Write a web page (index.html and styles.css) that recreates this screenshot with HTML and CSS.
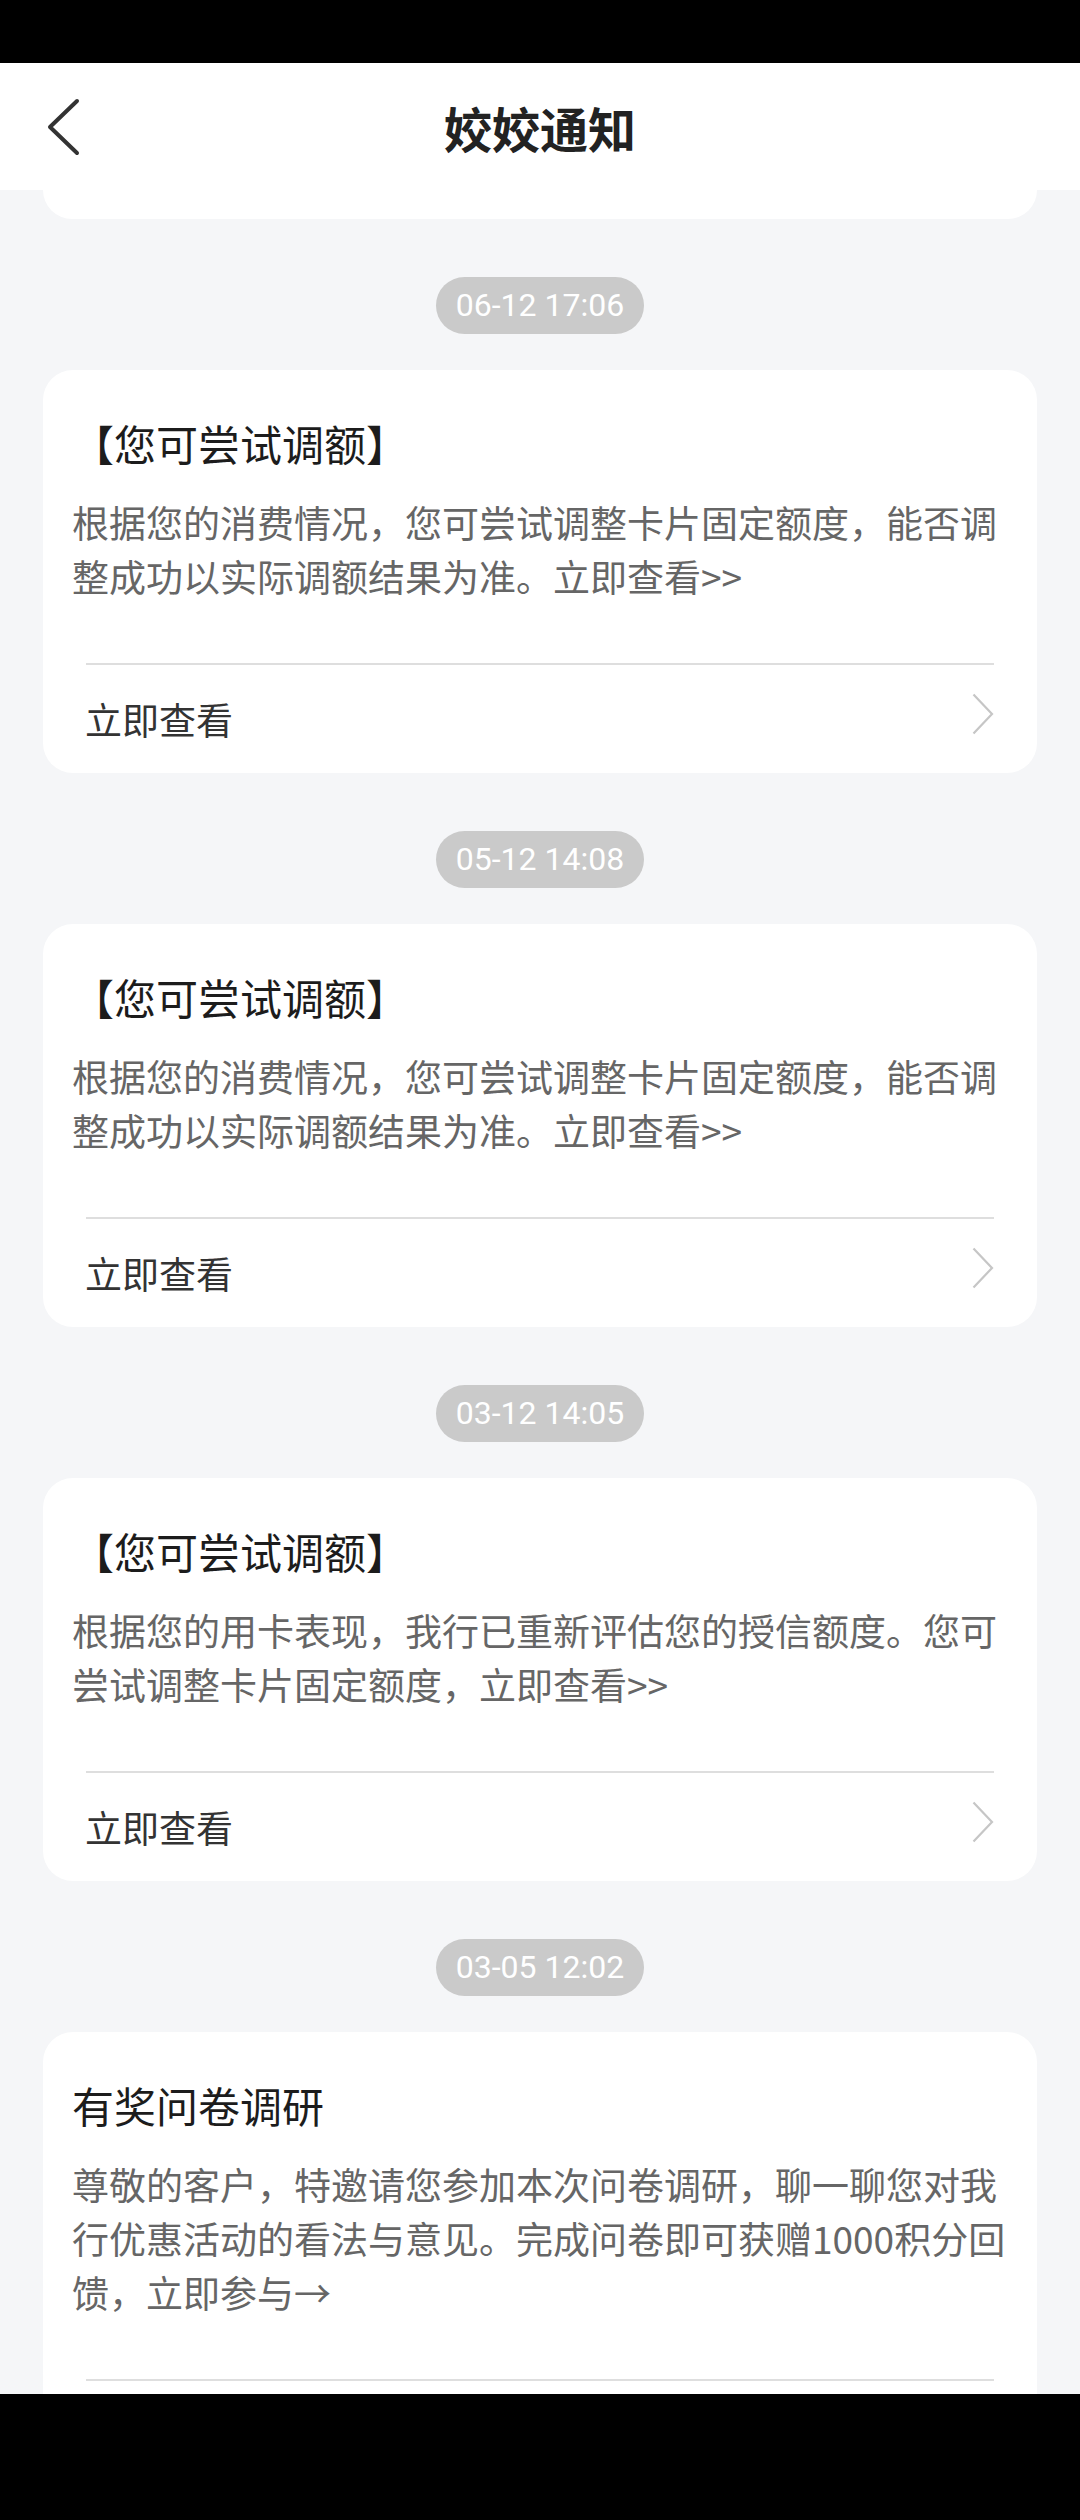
FILE: index.html
```html
<!DOCTYPE html>
<html lang="zh-CN">
<head>
<meta charset="utf-8">
<title>姣姣通知</title>
<link rel="stylesheet" href="styles.css">
</head>
<body>
<div class="phone">
  <div class="statusbar"></div>
  <header class="navbar">
    <div class="nav-left">
      <svg class="back" width="34" height="58" viewBox="0 0 34 58" aria-hidden="true">
        <polyline points="30,3 3,29 30,55" fill="none" stroke="#333" stroke-width="4" stroke-linecap="round" stroke-linejoin="round"/>
      </svg>
    </div>
    <h1 class="nav-title">姣姣通知</h1>
    <div class="nav-right"></div>
  </header>

  <main class="feed">
    <div class="card-cut"></div>

    <section class="msg">
      <div class="time"><span>06-12 17:06</span></div>
      <article class="card">
        <h2 class="card-title">【您可尝试调额】</h2>
        <p class="card-body">根据您的消费情况，您可尝试调整卡片固定额度，能否调整成功以实际调额结果为准。立即查看&gt;&gt;</p>
        <div class="card-foot">
          <span>立即查看</span>
          <svg class="chev" width="22" height="42" viewBox="0 0 22 42" aria-hidden="true"><polyline points="1.5,1.5 20,21 1.5,40.5" fill="none" stroke="#c6c6c6" stroke-width="2.2"/></svg>
        </div>
      </article>
    </section>

    <section class="msg">
      <div class="time"><span>05-12 14:08</span></div>
      <article class="card">
        <h2 class="card-title">【您可尝试调额】</h2>
        <p class="card-body">根据您的消费情况，您可尝试调整卡片固定额度，能否调整成功以实际调额结果为准。立即查看&gt;&gt;</p>
        <div class="card-foot">
          <span>立即查看</span>
          <svg class="chev" width="22" height="42" viewBox="0 0 22 42" aria-hidden="true"><polyline points="1.5,1.5 20,21 1.5,40.5" fill="none" stroke="#c6c6c6" stroke-width="2.2"/></svg>
        </div>
      </article>
    </section>

    <section class="msg">
      <div class="time"><span>03-12 14:05</span></div>
      <article class="card">
        <h2 class="card-title">【您可尝试调额】</h2>
        <p class="card-body">根据您的用卡表现，我行已重新评估您的授信额度。您可尝试调整卡片固定额度，立即查看&gt;&gt;</p>
        <div class="card-foot">
          <span>立即查看</span>
          <svg class="chev" width="22" height="42" viewBox="0 0 22 42" aria-hidden="true"><polyline points="1.5,1.5 20,21 1.5,40.5" fill="none" stroke="#c6c6c6" stroke-width="2.2"/></svg>
        </div>
      </article>
    </section>

    <section class="msg">
      <div class="time"><span>03-05 12:02</span></div>
      <article class="card">
        <h2 class="card-title">有奖问卷调研</h2>
        <p class="card-body">尊敬的客户，特邀请您参加本次问卷调研，聊一聊您对我行优惠活动的看法与意见。完成问卷即可获赠1000积分回馈，立即参与→</p>
        <div class="card-foot"></div>
      </article>
    </section>
  </main>

  <div class="homebar"></div>
</div>
</body>
</html>
```

FILE: styles.css
```css
* { box-sizing: border-box; }

html, body {
  margin: 0;
  padding: 0;
  background: #f5f6f8;
}

body {
  font-family: "Noto Sans CJK SC", "Noto Sans", sans-serif;
}

.phone {
  width: 1080px;
  height: 2520px;
  display: flex;
  flex-direction: column;
  overflow: hidden;
  background: #f5f6f8;
}

.statusbar {
  flex: none;
  height: 63px;
  background: #000;
}

.navbar {
  flex: none;
  height: 127px;
  background: #fff;
  display: grid;
  grid-template-columns: 1fr auto 1fr;
  align-items: center;
}

.nav-left {
  padding-left: 47px;
  display: flex;
  align-items: center;
}

.back { display: block; }

.nav-title {
  margin: 0;
  font-size: 48px;
  font-weight: 700;
  color: #222;
  line-height: 1;
}

.feed {
  flex: 1;
  min-height: 0;
  overflow: hidden;
  padding: 0 43px;
  display: flex;
  flex-direction: column;
}

.card-cut {
  flex: none;
  height: 29px;
  background: #fff;
  border-radius: 0 0 30px 30px;
}

.msg {
  flex: none;
  display: flex;
  flex-direction: column;
}

.time {
  margin-top: 58px;
  display: flex;
  justify-content: center;
}

.time span {
  height: 57px;
  line-height: 57px;
  padding: 0 20px;
  border-radius: 29px;
  background: #cacaca;
  color: #fff;
  font-family: Roboto, "Noto Sans", sans-serif;
  font-size: 32px;
}

.card {
  margin-top: 36px;
  background: #fff;
  border-radius: 30px;
  padding-top: 44px;
}

.card-title {
  margin: 0;
  padding: 0 20px 0 29px;
  font-size: 42px;
  line-height: 58px;
  font-weight: 400;
  color: #1c1c1c;
}

.card-body {
  margin: 23px 0 0;
  padding: 0 20px 0 29px;
  font-size: 37px;
  line-height: 54px;
  color: #666;
}

.card-foot {
  margin: 60px 43px 0;
  height: 110px;
  border-top: 2px solid #dedede;
  display: flex;
  align-items: center;
  justify-content: space-between;
  font-size: 37px;
  color: #333;
}

.card-foot span {
  line-height: 1;
  margin-left: -1px;
}

.chev {
  display: block;
  margin-top: -10px;
}

.homebar {
  flex: none;
  height: 126px;
  background: #000;
}
```
